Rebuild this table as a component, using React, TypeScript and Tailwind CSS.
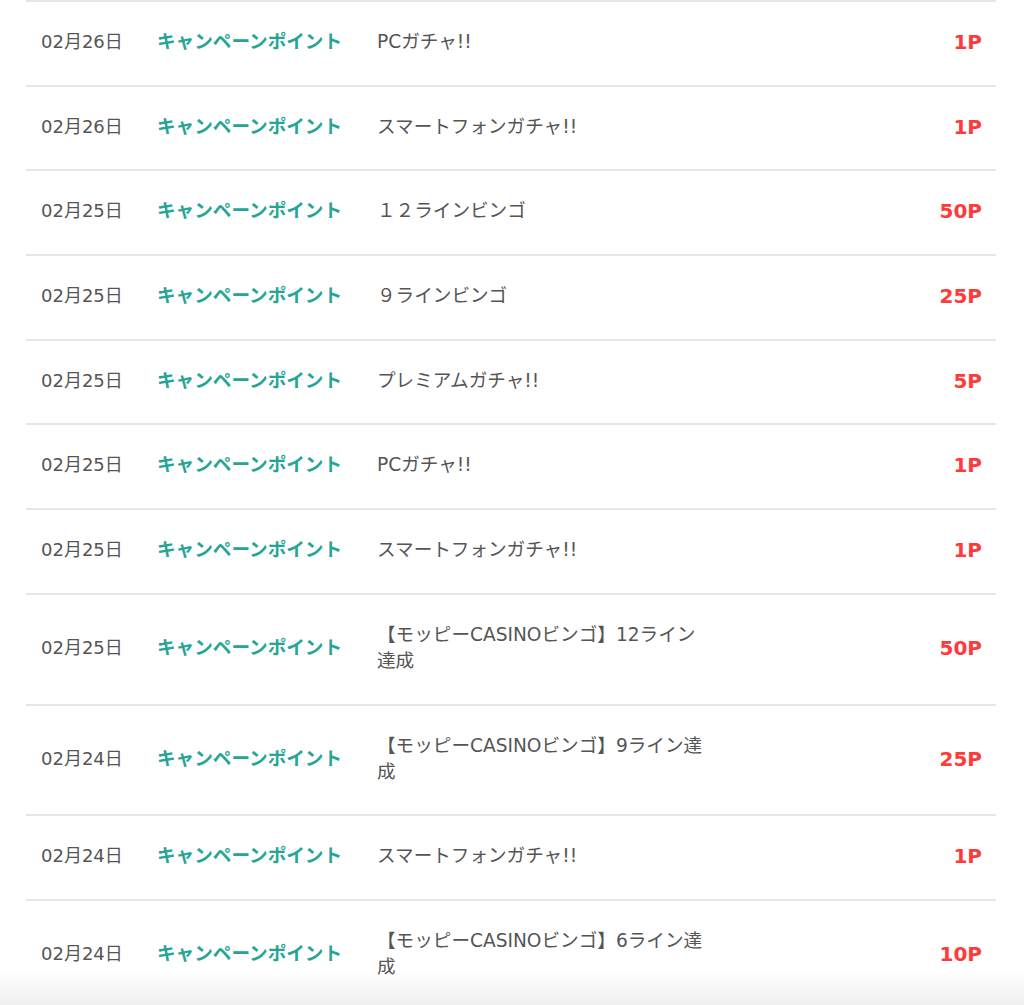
import React from 'react';

interface PointRow {
  date: string;
  label: string;
  title: string;
  point: string;
}

const rows: PointRow[] = [
  { date: '02月26日', label: 'キャンペーンポイント', title: 'PCガチャ!!', point: '1P' },
  { date: '02月26日', label: 'キャンペーンポイント', title: 'スマートフォンガチャ!!', point: '1P' },
  { date: '02月25日', label: 'キャンペーンポイント', title: '１２ラインビンゴ', point: '50P' },
  { date: '02月25日', label: 'キャンペーンポイント', title: '９ラインビンゴ', point: '25P' },
  { date: '02月25日', label: 'キャンペーンポイント', title: 'プレミアムガチャ!!', point: '5P' },
  { date: '02月25日', label: 'キャンペーンポイント', title: 'PCガチャ!!', point: '1P' },
  { date: '02月25日', label: 'キャンペーンポイント', title: 'スマートフォンガチャ!!', point: '1P' },
  { date: '02月25日', label: 'キャンペーンポイント', title: '【モッピーCASINOビンゴ】12ライン達成', point: '50P' },
  { date: '02月24日', label: 'キャンペーンポイント', title: '【モッピーCASINOビンゴ】9ライン達成', point: '25P' },
  { date: '02月24日', label: 'キャンペーンポイント', title: 'スマートフォンガチャ!!', point: '1P' },
  { date: '02月24日', label: 'キャンペーンポイント', title: '【モッピーCASINOビンゴ】6ライン達成', point: '10P' },
];

const App: React.FC = () => {
  return (
    <div
      className="relative min-h-screen bg-white"
      style={{ fontFamily: '"DejaVu Sans", "Noto Sans CJK JP", sans-serif' }}
    >
      <ul className="pl-[26px] pr-[28px]">
        {rows.map((row, index) => (
          <li
            key={index}
            className="flex items-center border-t-2 border-[#e6e6e6] pt-[27px] pb-[29.7px]"
          >
            <p className="w-[131px] shrink-0 pl-[15px] text-[18px] leading-[26px] text-[#555]">
              {row.date}
            </p>
            <p className="w-[220px] shrink-0 text-[18.6px] leading-[26px] font-bold text-[#26a596]">
              {row.label}
            </p>
            <p className="w-[330px] shrink-0 text-[18.6px] leading-[26px] text-[#555]">
              {row.title}
            </p>
            <p className="flex-1 pr-[14px] text-right text-[20px] leading-[26px] font-bold text-[#ff3a3a]">
              {row.point}
            </p>
          </li>
        ))}
      </ul>

      {/* bottom fade from the fixed footer */}
      <div className="pointer-events-none fixed bottom-0 left-0 right-0 h-[34px] bg-gradient-to-b from-white/0 to-[#efefef]" />
    </div>
  );
};

export default App;
